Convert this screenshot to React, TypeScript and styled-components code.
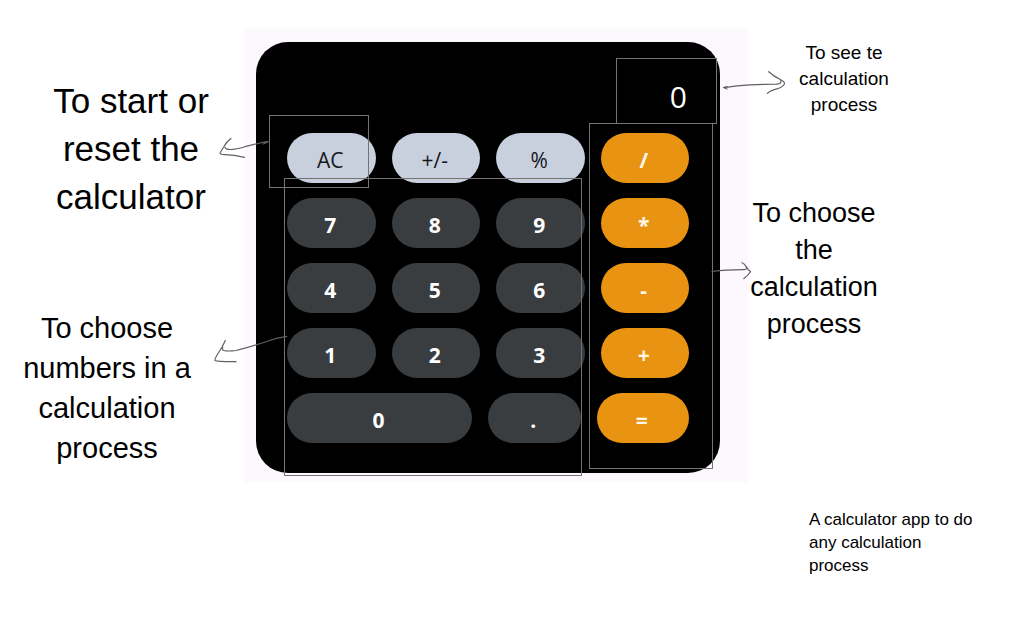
import React from "react";
import styled, { createGlobalStyle } from "styled-components";

const GlobalStyle = createGlobalStyle`
  *, *::before, *::after { box-sizing: border-box; }
  body {
    margin: 0;
    background: #ffffff;
    color: #000000;
    font-family: "Liberation Sans", Arial, sans-serif;
  }
`;

const Page = styled.main`
  display: grid;
  grid-template-columns: minmax(244px, 1fr) 505px minmax(275px, 1fr);
  align-items: start;
  min-height: 100vh;
`;

const LeftNotes = styled.aside`
  display: flex;
  flex-direction: column;
  align-items: flex-end;
  gap: 87px;
  padding-top: 77px;
`;

const RightNotes = styled.aside`
  display: flex;
  flex-direction: column;
  align-items: flex-start;
  gap: 77px;
  padding-top: 40px;
`;

const Note = styled.p<{ $size: number; $line: number; $width: number; $margin: string }>`
  width: ${(p) => p.$width}px;
  margin: ${(p) => p.$margin};
  font-size: ${(p) => p.$size}px;
  line-height: ${(p) => p.$line}px;
  text-align: center;
`;

const Caption = styled.p`
  width: 170px;
  margin: 88px 0 0 60px;
  font-size: 17px;
  line-height: 23px;
`;

const Stage = styled.section`
  position: relative;
  margin-top: 28px;
  padding: 14px 29px 10px 12px;
  background: #fdf8fe;
  box-shadow: inset 0 0 4px #ffffff;
`;

const Calculator = styled.div`
  padding: 0 31px 30px;
  border-radius: 32px;
  background: #000000;
  color: #ffffff;
  font-family: "Open Sans", "Noto Sans", sans-serif;
`;

const Display = styled.output`
  display: flex;
  align-items: flex-end;
  justify-content: flex-end;
  height: 91px;
  padding: 0 2px 16px;
  font-size: 30px;
  line-height: 40px;
`;

const Keypad = styled.div`
  display: flex;
  flex-direction: column;
  gap: 15px;
`;

const KeyRow = styled.div<{ $wide?: boolean }>`
  display: grid;
  grid-template-columns: ${(p) => (p.$wide ? "2fr 1fr 1fr" : "repeat(4, 1fr)")};
  gap: 16px;
`;

type Tone = "light" | "dark" | "accent";

const tones: Record<Tone, { bg: string; fg: string; weight: number }> = {
  light: { bg: "#c9d0dd", fg: "#14171c", weight: 500 },
  dark: { bg: "#3a3d40", fg: "#ffffff", weight: 700 },
  accent: { bg: "#e89311", fg: "#fff8e8", weight: 700 },
};

const Key = styled.button<{ $tone: Tone }>`
  height: 50px;
  padding: 4px 2px 0 0;
  border: 0;
  border-radius: 25px;
  background: ${(p) => tones[p.$tone].bg};
  color: ${(p) => tones[p.$tone].fg};
  font-family: inherit;
  font-size: 21px;
  font-weight: ${(p) => tones[p.$tone].weight};
  line-height: 28px;
  cursor: pointer;
`;

const Callout = styled.div<{ $x: number; $y: number; $w: number; $h: number }>`
  position: absolute;
  left: ${(p) => p.$x}px;
  top: ${(p) => p.$y}px;
  width: ${(p) => p.$w}px;
  height: ${(p) => p.$h}px;
  border: 1px solid #747474;
  pointer-events: none;
`;

const Arrows = styled.svg`
  position: absolute;
  left: 0;
  top: 0;
  overflow: visible;
  pointer-events: none;
  fill: none;
  stroke: #606060;
  stroke-width: 1.2;
  stroke-linecap: round;
  stroke-linejoin: round;
`;

const rows: { label: string; tone: Tone }[][] = [
  [
    { label: "AC", tone: "light" },
    { label: "+/-", tone: "light" },
    { label: "%", tone: "light" },
    { label: "/", tone: "accent" },
  ],
  [
    { label: "7", tone: "dark" },
    { label: "8", tone: "dark" },
    { label: "9", tone: "dark" },
    { label: "*", tone: "accent" },
  ],
  [
    { label: "4", tone: "dark" },
    { label: "5", tone: "dark" },
    { label: "6", tone: "dark" },
    { label: "-", tone: "accent" },
  ],
  [
    { label: "1", tone: "dark" },
    { label: "2", tone: "dark" },
    { label: "3", tone: "dark" },
    { label: "+", tone: "accent" },
  ],
  [
    { label: "0", tone: "dark" },
    { label: ".", tone: "dark" },
    { label: "=", tone: "accent" },
  ],
];

export default function App() {
  return (
    <>
      <GlobalStyle />
      <Page>
        <LeftNotes>
          <Note $size={35} $line={48} $width={170} $margin="0 28px 0 0">
            To start or reset the calculator
          </Note>
          <Note $size={29} $line={40} $width={180} $margin="0 47px 0 0">
            To choose numbers in a calculation process
          </Note>
        </LeftNotes>

        <Stage>
          <Calculator>
            <Display>0</Display>
            <Keypad>
              {rows.map((row, i) => (
                <KeyRow key={i} $wide={row.length === 3}>
                  {row.map((k) => (
                    <Key key={k.label} type="button" $tone={k.tone}>
                      {k.label}
                    </Key>
                  ))}
                </KeyRow>
              ))}
            </Keypad>
          </Calculator>

          <Callout $x={25} $y={87} $w={100} $h={73} />
          <Callout $x={40} $y={150} $w={298} $h={298} />
          <Callout $x={372} $y={30} $w={101} $h={66} />
          <Callout $x={345} $y={95} $w={124} $h={346} />

          <Arrows width="505" height="455" viewBox="244 28 505 455" aria-hidden="true">
            <path d="M269.5 141.7Q264 141.5 258 143.5L245 146.7Q236 149.5 230 149.5Q226 149.5 225 147.5M263 144L267 142.5" />
            <path d="M231 138.5Q226.500 141.500 224 146.500L220.200 152.500Q219.500 154 222 154.300Q235 155 244.500 157.300" />
            <path d="M286.700 336.300Q276 337.500 266.700 341.500Q247 348 236 350.500Q228 351.500 223.500 350.500Q222 350 222.700 347.500" />
            <path d="M225.300 340.500Q222.500 347 219 352Q214.500 358.500 215 360.500Q217 361.800 236 361.700" />
            <path d="M727 89L723.500 87.500L727 86.500M724 87.700Q737 85.500 750 84.800Q766 84.300 776 84.200Q782 84 780.800 80.500" />
            <path d="M768.700 71.700Q774 76.500 780 79.300Q785.500 82 784.300 84.300Q782 88 775 89.300Q770 90.500 767.300 93.300" />
            <path d="M712 271.300Q720 270.600 726.700 270.200L743.500 269.700Q747.500 269.500 746.300 266.700" />
            <path d="M742 262.700Q744.500 263.500 746 266.500Q748 270 750.500 271.500Q748.500 275 743.700 278.700" />
          </Arrows>
        </Stage>

        <RightNotes>
          <Note $size={19} $line={26} $width={110} $margin="0 0 0 40px">
            To see te calculation process
          </Note>
          <Note $size={27} $line={37} $width={130} $margin="0">
            To choose the calculation process
          </Note>
          <Caption>A calculator app to do any calculation process</Caption>
        </RightNotes>
      </Page>
    </>
  );
}
